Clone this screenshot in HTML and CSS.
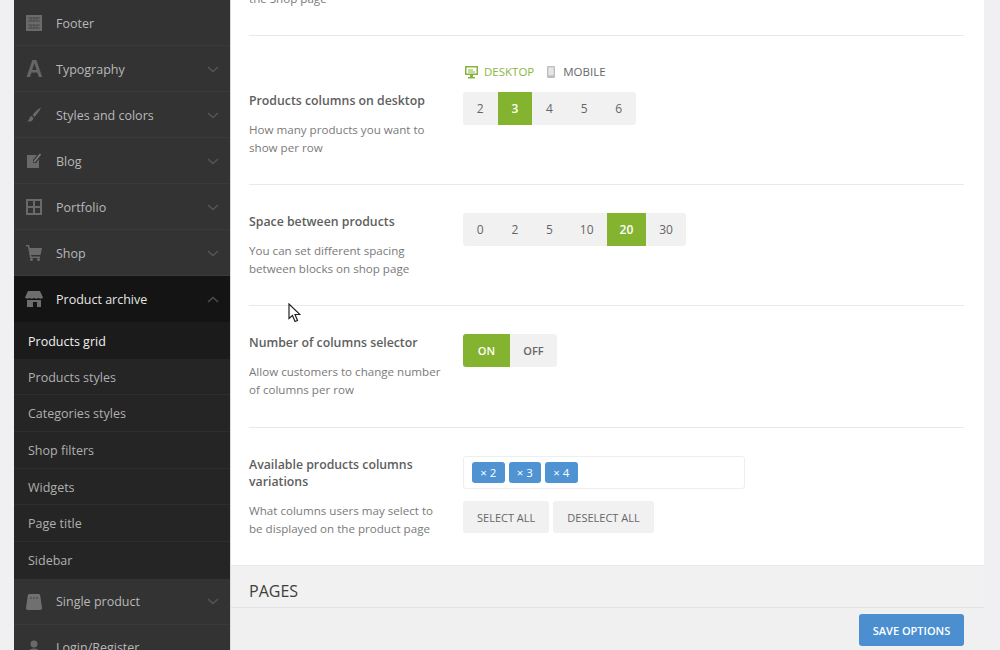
FILE: index.html
```html
<!DOCTYPE html>
<html lang="en">
<head>
<meta charset="utf-8">
<title>Theme settings</title>
<link rel="stylesheet" href="styles.css">
</head>
<body>
<div class="app">
  <nav class="sidebar">
    <div class="nav-item">
      <svg class="nav-icon" viewBox="0 0 16 16"><path d="M0 0h16v16H0z" fill="#6a6a6a"/><path d="M2 3h12M2 6h12M2 10h12M2 13h12M5 2v4M8 2v4M11 2v4M5 10v4M8 10v4M11 10v4" stroke="#4b4b4b" stroke-width="1" fill="none"/></svg>
      <span class="nav-label">Footer</span>
    </div>
    <div class="nav-item">
      <span class="nav-glyph">A</span>
      <span class="nav-label">Typography</span>
      <svg class="chev" viewBox="0 0 12 7"><path d="M1 1l5 4.5L11 1" fill="none" stroke="#555" stroke-width="1.6"/></svg>
    </div>
    <div class="nav-item">
      <svg class="nav-icon" viewBox="0 0 16 16"><path d="M15 0.5c-2 1-6 4-8.5 7.5l2 2C11 7.500 14 3 15 0.500zM5.500 9c-2 .5-1.500 3-4 5.500 3 .5 5.500-.5 6-3.500z" fill="#6a6a6a"/></svg>
      <span class="nav-label">Styles and colors</span>
      <svg class="chev" viewBox="0 0 12 7"><path d="M1 1l5 4.5L11 1" fill="none" stroke="#555" stroke-width="1.6"/></svg>
    </div>
    <div class="nav-item">
      <svg class="nav-icon" viewBox="0 0 16 16"><path d="M1 2h10L7 7v3h3l3-4v9H1z" fill="#6a6a6a"/><path d="M8 9l6.500-8" stroke="#7a7a7a" stroke-width="1.800"/></svg>
      <span class="nav-label">Blog</span>
      <svg class="chev" viewBox="0 0 12 7"><path d="M1 1l5 4.5L11 1" fill="none" stroke="#555" stroke-width="1.6"/></svg>
    </div>
    <div class="nav-item">
      <svg class="nav-icon" viewBox="0 0 16 16"><path d="M0 0h16v16H0zM2 2v5h5V2zM9 2v5h5V2zM2 9v5h5V9zM9 9v5h5V9z" fill="#6a6a6a" fill-rule="evenodd"/></svg>
      <span class="nav-label">Portfolio</span>
      <svg class="chev" viewBox="0 0 12 7"><path d="M1 1l5 4.5L11 1" fill="none" stroke="#555" stroke-width="1.6"/></svg>
    </div>
    <div class="nav-item">
      <svg class="nav-icon" viewBox="0 0 16 16"><path d="M0 0h3l1 3h12l-1.500 7H5l.5 1.500H14V13H4L2 1.500H0z" fill="#6a6a6a"/><circle cx="5.500" cy="14.500" r="1.500" fill="#6a6a6a"/><circle cx="12.500" cy="14.500" r="1.500" fill="#6a6a6a"/></svg>
      <span class="nav-label">Shop</span>
      <svg class="chev" viewBox="0 0 12 7"><path d="M1 1l5 4.5L11 1" fill="none" stroke="#555" stroke-width="1.6"/></svg>
    </div>
    <div class="nav-item nav-open">
      <svg class="nav-icon nav-icon-wide" viewBox="0 0 18 16"><path d="M3 0h12l3 6.500c-1 1.500-3 1.500-4.500.5-1.500 1-3 1-4.500 0-1.500 1-3 1-4.500 0C3 8 1 8 0 6.500z" fill="#6e6e6e"/><path d="M2 9h14v7h-4v-5H8v5H2z" fill="#6e6e6e"/></svg>
      <span class="nav-label">Product archive</span>
      <svg class="chev" viewBox="0 0 12 7"><path d="M1 6l5-4.500L11 6" fill="none" stroke="#4c4c4c" stroke-width="1.6"/></svg>
    </div>
    <ul class="subnav">
      <li class="sub-item sub-active">Products grid</li>
      <li class="sub-item">Products styles</li>
      <li class="sub-item">Categories styles</li>
      <li class="sub-item">Shop filters</li>
      <li class="sub-item">Widgets</li>
      <li class="sub-item">Page title</li>
      <li class="sub-item">Sidebar</li>
    </ul>
    <div class="nav-item">
      <svg class="nav-icon" viewBox="0 0 16 16"><path d="M3.500 0h9c1 0 1.500 .5 1.700 1.500L16 14c0 1-.5 2-2 2H2c-1.500 0-2-1-2-2L1.800 1.500C2 .5 2.500 0 3.500 0z" fill="#707070"/><path d="M5 3v2M8 3v2M11 3v2" stroke="#4b4b4b" stroke-width="1.200"/></svg>
      <span class="nav-label">Single product</span>
      <svg class="chev" viewBox="0 0 12 7"><path d="M1 1l5 4.5L11 1" fill="none" stroke="#555" stroke-width="1.6"/></svg>
    </div>
    <div class="nav-item">
      <svg class="nav-icon" viewBox="0 0 16 16"><circle cx="8" cy="4" r="3.500" fill="#6a6a6a"/><path d="M1 16c0-5 3-7.500 7-7.500s7 2.500 7 7.500z" fill="#6a6a6a"/></svg>
      <span class="nav-label">Login/Register</span>
    </div>
  </nav>

  <main class="main">
    <div class="card">
      <section class="row row-clipped">
        <p class="desc">the Shop page</p>
      </section>

      <section class="row row-devices">
        <div class="devices">
          <span class="device device-on">
            <svg class="device-icon" viewBox="0 0 13 13"><path d="M0 0h13v9H0zM1.500 1.500v6h10v-6z" fill="#86b53c" fill-rule="evenodd"/><path d="M3 3.500h5v1H3zM3 5.500h7v1H3zM5 9h3v2H5zM3 11h7v1.500H3z" fill="#86b53c"/></svg>
            Desktop
          </span>
          <span class="device">
            <svg class="device-icon device-icon-phone" viewBox="0 0 8 12"><rect width="8" height="12" rx="1" fill="#bdbdbd"/><rect x="1.300" y="1.300" width="5.400" height="8" fill="#e6e6e6"/></svg>
            Mobile
          </span>
        </div>
        <div class="label">
          <h3 class="title">Products columns on desktop</h3>
          <p class="desc">How many products you want to show per row</p>
        </div>
        <div class="group">
          <span class="opt">2</span><span class="opt opt-on">3</span><span class="opt">4</span><span class="opt">5</span><span class="opt">6</span>
        </div>
      </section>

      <section class="row">
        <div class="label">
          <h3 class="title">Space between products</h3>
          <p class="desc">You can set different spacing between blocks on shop page</p>
        </div>
        <div class="group">
          <span class="opt">0</span><span class="opt">2</span><span class="opt">5</span><span class="opt">10</span><span class="opt opt-on">20</span><span class="opt">30</span>
        </div>
      </section>

      <section class="row row-toggle">
        <div class="label">
          <h3 class="title">Number of columns selector</h3>
          <p class="desc">Allow customers to change number of columns per row</p>
        </div>
        <div class="group">
          <span class="opt opt-toggle opt-on">ON</span><span class="opt opt-toggle">OFF</span>
        </div>
      </section>

      <section class="row row-last">
        <div class="label">
          <h3 class="title">Available products columns variations</h3>
          <p class="desc">What columns users may select to be displayed on the product page</p>
        </div>
        <div class="control">
          <div class="tagbox">
            <span class="tag">× 2</span><span class="tag">× 3</span><span class="tag">× 4</span>
          </div>
          <div class="actions">
            <span class="btn">Select all</span><span class="btn">Deselect all</span>
          </div>
        </div>
      </section>
    </div>

    <h2 class="section-head">PAGES</h2>
    <footer class="savebar"><span class="save">Save options</span></footer>

    <svg class="cursor" viewBox="0 0 13 20"><path d="M1 1v14.500l3.500-3 2.500 6 2.500-1-2.500-6H12z" fill="#fff" stroke="#222" stroke-width="1.200" stroke-linejoin="miter"/></svg>
  </main>
  <div class="gutter"></div>
</div>
</body>
</html>
```
FILE: styles.css
```css
* { box-sizing: border-box; }
html, body { margin: 0; height: 650px; overflow: hidden; }
body { background: #f0f0f2; font-family: "Open Sans", "Liberation Sans", sans-serif; color: #555; }
.app { display: flex; height: 650px; padding-left: 14px; }

.sidebar { width: 216px; flex: none; background: #333333; overflow: hidden; }
.nav-item { height: 46px; display: flex; align-items: center; padding: 1px 11px 0 12px; border-bottom: 1px solid #3a3a3a; color: #b8b8b8; }
.nav-icon { width: 16px; height: 16px; flex: none; }
.nav-icon-wide { width: 18px; margin-left: -1px; margin-right: -1px; }
.nav-glyph { width: 16px; flex: none; text-align: center; font: bold 23px/1 "Liberation Sans", sans-serif; color: #666; }
.nav-label { margin-left: 14px; flex: 1; font-size: 12.500px; }
.chev { width: 12px; height: 7px; flex: none; }
.nav-open { background: #141414; border-bottom: 0; color: #e6e6e6; padding-top: 0; }

.subnav { list-style: none; margin: 0; padding: 0; background: #252525; }
.sub-item { height: 36.700px; display: flex; align-items: center; padding: 1px 0 0 14px; font-size: 12.500px; color: #b0b0b0; border-bottom: 1px solid #2e2e2e; }
.sub-item:last-child { border-bottom: 0; padding-top: 0; }
.sub-active { background: #1b1b1b; color: #f0f0f0; border-bottom: 0; padding-top: 2px; }

.main { position: relative; width: 754px; flex: none; display: flex; flex-direction: column; background: #f1f1f1; border-left: 1px solid #dcdcdc; }
.gutter { flex: 1; }
.card { background: #fff; padding: 0 20px 0 18px; height: 566px; flex: none; border-bottom: 1px solid #ebebeb; }
.row { display: grid; grid-template-columns: 214px 1fr; padding: 28px 0 27px; border-bottom: 1px solid #e9e9e9; align-content: start; }
.row-clipped { display: flex; flex-direction: column; justify-content: flex-end; height: 36px; padding: 0 0 27px; }
.row-devices { grid-template-rows: 28px auto; }
.row-toggle { padding-bottom: 28px; }
.row-last { border-bottom: 0; }
.devices { grid-column: 2; grid-row: 1; display: flex; gap: 13px; align-items: flex-start; padding-left: 2px; }
.device { display: flex; align-items: center; gap: 6px; font-size: 11.500px; font-weight: 500; text-transform: uppercase; color: #666; line-height: 16px; }
.device-on { color: #8ab53f; }
.device-icon { width: 13px; height: 13px; }
.device-icon-phone { width: 8px; height: 12px; margin: 0 2px 0 0; }

.label { grid-column: 1; }
.row-devices .label, .row-devices .group { grid-row: 2; }
.title { margin: 0; font-size: 12.300px; line-height: 17px; font-weight: 600; color: #5e5e5e; width: 195px; }
.desc { margin: 12px 0 0; font-size: 11.600px; line-height: 18px; color: #7a7a7a; width: 195px; }
.row-clipped .desc { margin: 0; }

.group { grid-column: 2; justify-self: start; align-self: start; display: flex; height: 33px; background: #f1f1f1; border-radius: 3px; }
.opt { min-width: 34.600px; padding: 0 13px; display: flex; align-items: center; justify-content: center; font-size: 12px; color: #666; }
.opt-on { background: #83b32f; color: #fff; font-weight: 600; }
.opt-toggle { width: 47px; padding: 0; font-weight: 600; font-size: 11px; }
.opt-toggle.opt-on { border-radius: 3px 0 0 3px; }

.control { grid-column: 2; }
.tagbox { width: 282px; height: 33px; display: flex; align-items: center; gap: 4px; padding-left: 8px; background: #fff; border: 1px solid #eeeeee; border-radius: 3px; }
.tag { height: 21px; width: 32.500px; display: flex; align-items: center; justify-content: center; background: #4f93d3; color: #fff; font-size: 11.500px; font-weight: 500; border-radius: 3px; }
.actions { display: flex; gap: 4px; margin-top: 12px; }
.btn { height: 32px; padding: 0 14px; display: flex; align-items: center; background: #f1f1f1; border-radius: 3px; font-size: 11px; font-weight: 500; text-transform: uppercase; color: #666; }

.section-head { margin: 0; height: 42px; flex: none; display: flex; align-items: center; padding: 9px 0 0 18px; font-size: 16px; font-weight: 500; color: #3e3e3e; border-bottom: 1px solid #e4e4e8; background: #f1f1f1; }
.savebar { flex: 1; display: flex; justify-content: flex-end; padding: 6px 20px 0 0; background: #f0f0f0; }
.save { width: 105px; height: 32px; display: flex; align-items: center; justify-content: center; background: #4b8fd1; color: #fff; border-radius: 3px; font-size: 11px; font-weight: 600; text-transform: uppercase; }

.cursor { position: absolute; left: 57px; top: 303px; width: 13px; height: 20px; }
```
